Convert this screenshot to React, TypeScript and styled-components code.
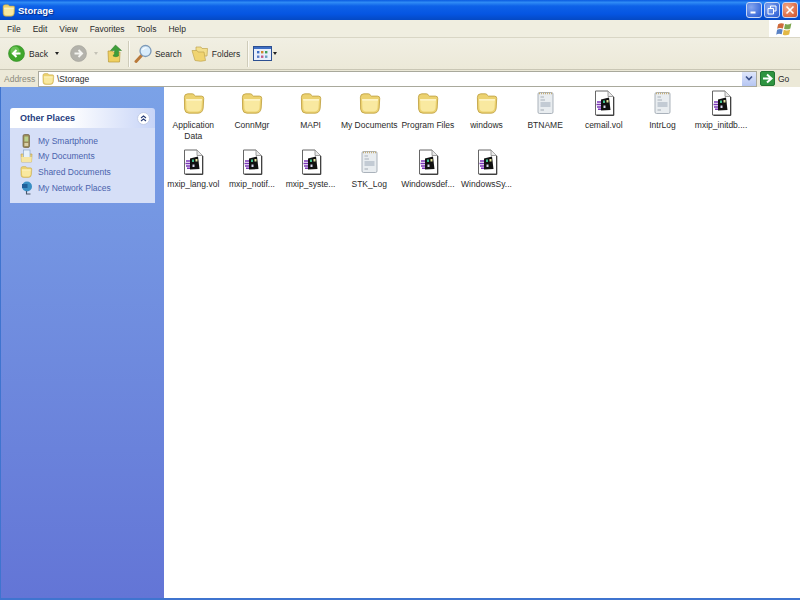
import React from "react";
import styled, { createGlobalStyle } from "styled-components";

const GlobalStyle = createGlobalStyle`
  html, body {
    margin: 0;
    padding: 0;
    width: 800px;
    height: 600px;
    overflow: hidden;
  }
  * {
    box-sizing: border-box;
  }
  body {
    font-family: "Liberation Sans", Arial, sans-serif;
    font-size: 8.5px;
    color: #2a2a2a;
  }
`;

const Window = styled.div`
  width: 800px;
  height: 600px;
  display: flex;
  flex-direction: column;
  background: #3f74cf;
`;

const TitleBar = styled.div`
  height: 20px;
  flex: none;
  display: flex;
  align-items: center;
  padding: 0 2px 0 1px;
  gap: 2px;
  background: linear-gradient(180deg, #0a5ae0 0%, #2f8bf5 12%, #0e62e8 30%, #0555e2 70%, #0449c4 100%);
`;

const TitleText = styled.span`
  flex: 1;
  color: #fff;
  font-size: 9.5px;
  font-weight: bold;
  text-shadow: 1px 1px 1px #0a2a80;
`;

const WinButton = styled.div<{ $close?: boolean }>`
  width: 16px;
  height: 16px;
  border: 1px solid #c9d8f5;
  border-radius: 3px;
  display: flex;
  align-items: center;
  justify-content: center;
  background: ${(p) =>
    p.$close
      ? "radial-gradient(circle at 30% 30%, #f0a888, #dc6a45 70%, #c9502f)"
      : "radial-gradient(circle at 30% 30%, #86a6ee, #3f6fdc 70%, #2c58c4)"};
`;

const MenuBar = styled.div`
  height: 18px;
  flex: none;
  display: flex;
  align-items: center;
  background: #f0eee0;
  border-bottom: 1px solid #d9d6c5;
  padding-left: 7px;
  gap: 12px;
  font-size: 8.5px;
`;

const LogoBox = styled.div`
  margin-left: auto;
  width: 31px;
  height: 17px;
  background: #fff;
  display: flex;
  align-items: center;
  justify-content: center;
`;

const Toolbar = styled.div`
  height: 32px;
  flex: none;
  display: flex;
  align-items: center;
  background: linear-gradient(180deg, #f1efe3, #ece9d8);
  border-bottom: 1px solid #c9c6b4;
  padding-left: 8px;
  font-size: 8.5px;
`;

const ToolButton = styled.div<{ $gap?: number; $left?: number }>`
  display: flex;
  align-items: center;
  gap: ${(p) => p.$gap ?? 3}px;
  margin-left: ${(p) => p.$left ?? 0}px;
  flex: none;
`;

const DropArrow = styled.span<{ $muted?: boolean; $space: number }>`
  width: 0;
  height: 0;
  margin-left: ${(p) => p.$space}px;
  border-left: 2.5px solid transparent;
  border-right: 2.5px solid transparent;
  border-top: 3px solid ${(p) => (p.$muted ? "#c4c2b6" : "#222")};
`;

const ToolDivider = styled.div<{ $left: number; $right: number }>`
  width: 1px;
  height: 26px;
  margin: 0 ${(p) => p.$right}px 0 ${(p) => p.$left}px;
  background: #cfccba;
  box-shadow: 1px 0 0 #fbfaf4;
`;

const AddressBar = styled.div`
  height: 17px;
  flex: none;
  display: flex;
  align-items: center;
  background: #ece9d8;
  padding-left: 4px;
`;

const AddressLabel = styled.span`
  width: 34px;
  color: #8b897c;
  font-size: 8.5px;
`;

const AddressInput = styled.div`
  flex: 1;
  height: 16px;
  background: #fff;
  border: 1px solid #a9a99c;
  display: flex;
  align-items: center;
  padding-left: 2px;
  gap: 2px;
  font-size: 8.5px;
`;

const ComboButton = styled.div`
  margin-left: auto;
  width: 14px;
  height: 14px;
  background: linear-gradient(180deg, #dfe6fb, #b6c6f2);
  display: flex;
  align-items: center;
  justify-content: center;
`;

const GoButton = styled.div`
  width: 43px;
  flex: none;
  display: flex;
  align-items: center;
  gap: 3px;
  padding-left: 3px;
  font-size: 8.5px;
`;

const Body = styled.div`
  flex: 1;
  min-height: 0;
  display: flex;
  margin: 0 0 2px 1px;
  background: #fff;
`;

const Sidebar = styled.aside`
  width: 163px;
  flex: none;
  padding: 21px 9px 0 9px;
  background: linear-gradient(180deg, #7ba2e7 0%, #6375d6 100%);
`;

const TaskPanel = styled.section`
  width: 145px;
`;

const PanelHeader = styled.header`
  height: 20px;
  display: flex;
  align-items: center;
  justify-content: space-between;
  padding: 0 5px 0 10px;
  border-radius: 3px 3px 0 0;
  background: linear-gradient(90deg, #ffffff 40%, #c7d4f7 100%);
  color: #27407f;
  font-size: 9px;
  font-weight: bold;
`;

const Collapse = styled.div`
  width: 13px;
  height: 13px;
  border-radius: 50%;
  background: #fff;
  border: 1px solid #c2cde8;
  display: flex;
  align-items: center;
  justify-content: center;
`;

const PanelBody = styled.ul`
  list-style: none;
  margin: 0;
  padding: 5px 0 8px 10px;
  background: #d6dff7;
`;

const PlaceRow = styled.li`
  height: 15.6px;
  display: flex;
  align-items: center;
  gap: 6px;
  color: #4a63ad;
  font-size: 8.5px;
  white-space: nowrap;
`;

const PlaceIcon = styled.span`
  width: 12px;
  flex: none;
  display: flex;
  justify-content: center;
  svg {
    flex: none;
  }
`;

const FileArea = styled.main`
  flex: 1;
  display: grid;
  grid-template-columns: repeat(10, 58.65px);
  grid-auto-rows: 58.5px;
  align-content: start;
  padding-top: 3px;
`;

const FileItem = styled.div`
  display: flex;
  flex-direction: column;
  align-items: center;
`;

const IconSlot = styled.div`
  height: 26px;
  display: flex;
  align-items: center;
  justify-content: center;
`;

const FileLabel = styled.div`
  margin-top: 4px;
  width: 58px;
  display: flex;
  justify-content: center;
  text-align: center;
  line-height: 10.5px;
  font-size: 8.5px;
  white-space: pre;
`;

const FolderIcon = ({ size = 25 }: { size?: number }) => (
  <svg width={size} height={size} viewBox="0 0 22 22">
    <path
      d="M3 5.5 Q3 2.5 6 2.5 L10 2.5 Q11.5 2.5 12 4 L12.5 4.5 L18 4.5 Q20 4.5 20 6.5 L19.5 15 Q19 19.5 15 19.5 L7 19.5 Q3.5 19.5 3.2 16 Z"
      fill="#ecd270"
      stroke="#c2a448"
      strokeWidth="0.8"
    />
    <path d="M4.5 7 L18.5 7 L18 15 Q17.5 18 14.5 18 L8 18 Q5 18 4.8 15 Z" fill="#f9e9a0" />
    <path d="M4.5 7 L18.5 7 L18.4 8.5 L4.6 8.5 Z" fill="#fdf3c4" />
  </svg>
);

const NoteIcon = () => (
  <svg width="17" height="24" viewBox="0 0 17 24">
    <rect x="1" y="1.5" width="15" height="21" rx="1.5" fill="#e9edf0" stroke="#a2aab3" strokeWidth="0.9" />
    <path d="M2 2.3 H15" stroke="#c4ad78" strokeWidth="1.8" strokeDasharray="1 1" />
    <path d="M3.5 6 H7 M3.5 9 H8" stroke="#a2aab3" strokeWidth="0.9" />
    <rect x="3.5" y="11" width="10" height="5" fill="#c3cbd4" />
    <path d="M3.5 19 H7" stroke="#a2aab3" strokeWidth="1" />
  </svg>
);

const VolIcon = () => (
  <svg width="22" height="26" viewBox="0 0 22 26">
    <path d="M2.5 1 H15 L20.5 6.5 V25 H2.5 Z" fill="#fff" stroke="#666" strokeWidth="1" />
    <path d="M15 1 V6.5 H20.5" fill="#e8e8e8" stroke="#888" strokeWidth="0.8" />
    <path d="M20.8 7 V25.4 H3.5" fill="none" stroke="#333" strokeWidth="1" />
    <path d="M8 9.5 L16 7.5 L17.5 20 L8 20.5 Z" fill="#111" />
    <rect x="10" y="10.5" width="2" height="2.5" fill="#3fbf8f" />
    <rect x="13.5" y="10" width="2" height="2.5" fill="#e8e8a0" />
    <rect x="10.5" y="15.5" width="2" height="2.5" fill="#d8d8f0" />
    <path d="M4 12 H8 M3.5 14.5 H8 M4 17 H8 M5 19.2 H8" stroke="#7a35b8" strokeWidth="1.4" />
  </svg>
);

const BackIcon = () => (
  <svg width="17" height="17" viewBox="0 0 17 17">
    <circle cx="8.5" cy="8.5" r="8" fill="#3fa62c" stroke="#2f8a22" strokeWidth="0.6" />
    <circle cx="7" cy="6" r="4.5" fill="#86d66e" opacity="0.6" />
    <path d="M12.5 8.5 H5.5 M8.5 5 L5 8.5 L8.5 12" fill="none" stroke="#fff" strokeWidth="2" />
  </svg>
);

const ForwardIcon = () => (
  <svg width="17" height="17" viewBox="0 0 17 17">
    <circle cx="8.5" cy="8.5" r="8" fill="#b3b2ab" stroke="#a2a199" strokeWidth="0.6" />
    <path d="M4.5 8.5 H11.5 M8.5 5 L12 8.5 L8.5 12" fill="none" stroke="#f4f4f0" strokeWidth="2" />
  </svg>
);

const UpIcon = () => (
  <svg width="16" height="19" viewBox="0 0 16 19">
    <path d="M1 7 H5 L6 8 H13 L12.5 18 H1.5 Z" fill="#f0d060" stroke="#b89a3a" strokeWidth="0.7" />
    <path d="M8.5 1 L14.5 6.5 H11.5 V12 Q9 13.5 6 12 Q8 10 7.8 6.5 H3.5 Z" fill="#3f9e3a" stroke="#2c7a2a" strokeWidth="0.5" />
  </svg>
);

const SearchIcon = () => (
  <svg width="19" height="20" viewBox="0 0 19 20">
    <path d="M7.5 11.5 L2 17.5" stroke="#b9793a" strokeWidth="3" strokeLinecap="round" />
    <circle cx="11.5" cy="7" r="5.5" fill="#d8ecfb" stroke="#7d9ab8" strokeWidth="1.3" />
    <path d="M8.5 6 Q10 3.5 12.5 3.8" stroke="#fff" strokeWidth="1.2" fill="none" />
  </svg>
);

const FoldersIcon = () => (
  <svg width="18" height="18" viewBox="0 0 18 18">
    <path d="M5 2 H10 L11 3.5 H16.5 L16 11 H5 Z" fill="#f3df8c" stroke="#c0a550" strokeWidth="0.7" />
    <path d="M1 5.5 H6 L7 7 H13 L14.5 15.5 Q10 17 4 15.5 Z" fill="#f0d470" stroke="#c0a550" strokeWidth="0.7" />
  </svg>
);

const ViewsIcon = () => (
  <svg width="19" height="15" viewBox="0 0 19 15">
    <rect x="0.5" y="0.5" width="18" height="14" fill="#e8eefb" stroke="#2c4f91" />
    <rect x="1" y="1" width="17" height="2" fill="#3f6fc4" />
    <rect x="4" y="5" width="2.4" height="2.4" fill="#3f6fc4" />
    <rect x="8" y="5" width="2.4" height="2.4" fill="#d0862c" />
    <rect x="12" y="5" width="2.4" height="2.4" fill="#3f9e5a" />
    <rect x="4" y="9.5" width="2.4" height="2.4" fill="#5a7ac4" />
    <rect x="8" y="9.5" width="2.4" height="2.4" fill="#c45a8a" />
    <rect x="12" y="9.5" width="2.4" height="2.4" fill="#6a9ec4" />
  </svg>
);

const GoIcon = () => (
  <svg width="15" height="15" viewBox="0 0 15 15">
    <rect x="0.5" y="0.5" width="14" height="14" rx="1.5" fill="#2f9440" stroke="#237533" />
    <path d="M3 7.5 H10 M7 3.5 L11.5 7.5 L7 11.5" fill="none" stroke="#fff" strokeWidth="2" />
  </svg>
);

const ChevronDown = () => (
  <svg width="8" height="7" viewBox="0 0 8 7">
    <path d="M1 1.5 L4 4.5 L7 1.5" fill="none" stroke="#3a4f88" strokeWidth="1.6" />
  </svg>
);

const ChevronsUp = () => (
  <svg width="7" height="7" viewBox="0 0 7 7">
    <path d="M1 3 L3.5 1 L6 3 M1 6 L3.5 4 L6 6" fill="none" stroke="#2a3f78" strokeWidth="1.1" />
  </svg>
);

const XpLogo = () => (
  <svg width="17" height="16" viewBox="0 0 16 15">
    <path d="M2 3 Q4.5 1.5 7.5 2.5 L6.5 7 Q3.5 6 1 7.2 Z" fill="#cf6a3c" />
    <path d="M8.5 2.8 Q11.5 4 14.5 2 L13.5 7 Q10.5 8.5 7.6 7.2 Z" fill="#7da650" />
    <path d="M1 8.2 Q3.5 7 6.3 8 L5.4 12.5 Q2.5 11.5 0.2 12.8 Z" fill="#5a82c4" />
    <path d="M7.3 8.3 Q10.5 9.5 13.3 8 L12.4 12.6 Q9.5 14 6.4 12.8 Z" fill="#e3b846" />
  </svg>
);

const PhoneIcon = () => (
  <svg width="12" height="14" viewBox="0 0 12 14">
    <rect x="3" y="0.5" width="6.5" height="13" rx="1.5" fill="#9a8a5a" stroke="#6d6242" strokeWidth="0.7" />
    <rect x="4.4" y="2.5" width="3.8" height="5" fill="#b9d08a" />
    <rect x="4.4" y="9" width="3.8" height="3" fill="#d8cfa8" />
  </svg>
);

const MyDocsIcon = () => (
  <svg width="13" height="14" viewBox="0 0 12 14">
    <path d="M0.5 5 H11.5 L11 13 H1 Z" fill="#f0d880" stroke="#b89c48" strokeWidth="0.6" />
    <rect x="3" y="1" width="6.5" height="7.5" fill="#e8f2fb" stroke="#7f9fc4" strokeWidth="0.6" />
    <path d="M0.8 8 H11.2 L11 13 H1 Z" fill="#f6e6a4" />
  </svg>
);

const NetworkIcon = () => (
  <svg width="13" height="14" viewBox="0 0 12 14">
    <circle cx="6.5" cy="5.5" r="5" fill="#3a8fc4" />
    <path d="M1.5 3 H7 V7 H1.5 Z" fill="#1f5f9a" />
    <path d="M6 10 V13 H10" stroke="#48566a" strokeWidth="1.1" fill="none" />
  </svg>
);

type FileKind = "folder" | "note" | "vol";

const files: { name: string; kind: FileKind }[] = [
  { name: "Application\nData", kind: "folder" },
  { name: "ConnMgr", kind: "folder" },
  { name: "MAPI", kind: "folder" },
  { name: "My Documents", kind: "folder" },
  { name: "Program Files", kind: "folder" },
  { name: "windows", kind: "folder" },
  { name: "BTNAME", kind: "note" },
  { name: "cemail.vol", kind: "vol" },
  { name: "IntrLog", kind: "note" },
  { name: "mxip_initdb....", kind: "vol" },
  { name: "mxip_lang.vol", kind: "vol" },
  { name: "mxip_notif...", kind: "vol" },
  { name: "mxip_syste...", kind: "vol" },
  { name: "STK_Log", kind: "note" },
  { name: "Windowsdef...", kind: "vol" },
  { name: "WindowsSy...", kind: "vol" },
];

const fileIcon = (kind: FileKind) => {
  if (kind === "folder") return <FolderIcon />;
  if (kind === "note") return <NoteIcon />;
  return <VolIcon />;
};

const App = () => {
  return (
    <Window>
      <GlobalStyle />
      <TitleBar>
        <FolderIcon size={15} />
        <TitleText>Storage</TitleText>
        <WinButton>
          <svg width="8" height="8" viewBox="0 0 8 8">
            <rect x="0.5" y="5.5" width="5" height="2" fill="#fff" />
          </svg>
        </WinButton>
        <WinButton>
          <svg width="10" height="10" viewBox="0 0 10 10">
            <path d="M3.5 3 V1 H9 V6 H7 M1 3.5 H6.5 V9 H1 Z" fill="none" stroke="#fff" />
          </svg>
        </WinButton>
        <WinButton $close>
          <svg width="10" height="10" viewBox="0 0 10 10">
            <path d="M1.5 1.5 L8.5 8.5 M8.5 1.5 L1.5 8.5" stroke="#fff" strokeWidth="1.6" />
          </svg>
        </WinButton>
      </TitleBar>

      <MenuBar>
        <span>File</span>
        <span>Edit</span>
        <span>View</span>
        <span>Favorites</span>
        <span>Tools</span>
        <span>Help</span>
        <LogoBox>
          <XpLogo />
        </LogoBox>
      </MenuBar>

      <Toolbar>
        <ToolButton $gap={4}>
          <BackIcon />
          <span>Back</span>
        </ToolButton>
        <DropArrow $space={7} />
        <ToolButton $left={11}>
          <ForwardIcon />
        </ToolButton>
        <DropArrow $muted $space={7} />
        <ToolButton $left={9}>
          <UpIcon />
        </ToolButton>
        <ToolDivider $left={5} $right={5} />
        <ToolButton $gap={2}>
          <SearchIcon />
          <span>Search</span>
        </ToolButton>
        <ToolButton $gap={3} $left={9}>
          <FoldersIcon />
          <span>Folders</span>
        </ToolButton>
        <ToolDivider $left={7} $right={5} />
        <ToolButton>
          <ViewsIcon />
        </ToolButton>
        <DropArrow $space={1} />
      </Toolbar>

      <AddressBar>
        <AddressLabel>Address</AddressLabel>
        <AddressInput>
          <FolderIcon size={14} />
          <span>\Storage</span>
          <ComboButton>
            <ChevronDown />
          </ComboButton>
        </AddressInput>
        <GoButton>
          <GoIcon />
          <span>Go</span>
        </GoButton>
      </AddressBar>

      <Body>
        <Sidebar>
          <TaskPanel>
            <PanelHeader>
              <span>Other Places</span>
              <Collapse>
                <ChevronsUp />
              </Collapse>
            </PanelHeader>
            <PanelBody>
              <PlaceRow>
                <PlaceIcon>
                  <PhoneIcon />
                </PlaceIcon>
                My Smartphone
              </PlaceRow>
              <PlaceRow>
                <PlaceIcon>
                  <MyDocsIcon />
                </PlaceIcon>
                My Documents
              </PlaceRow>
              <PlaceRow>
                <PlaceIcon>
                  <FolderIcon size={14} />
                </PlaceIcon>
                Shared Documents
              </PlaceRow>
              <PlaceRow>
                <PlaceIcon>
                  <NetworkIcon />
                </PlaceIcon>
                My Network Places
              </PlaceRow>
            </PanelBody>
          </TaskPanel>
        </Sidebar>
        <FileArea>
          {files.map((file) => (
            <FileItem key={file.name}>
              <IconSlot>{fileIcon(file.kind)}</IconSlot>
              <FileLabel>{file.name}</FileLabel>
            </FileItem>
          ))}
        </FileArea>
      </Body>
    </Window>
  );
};

export default App;
